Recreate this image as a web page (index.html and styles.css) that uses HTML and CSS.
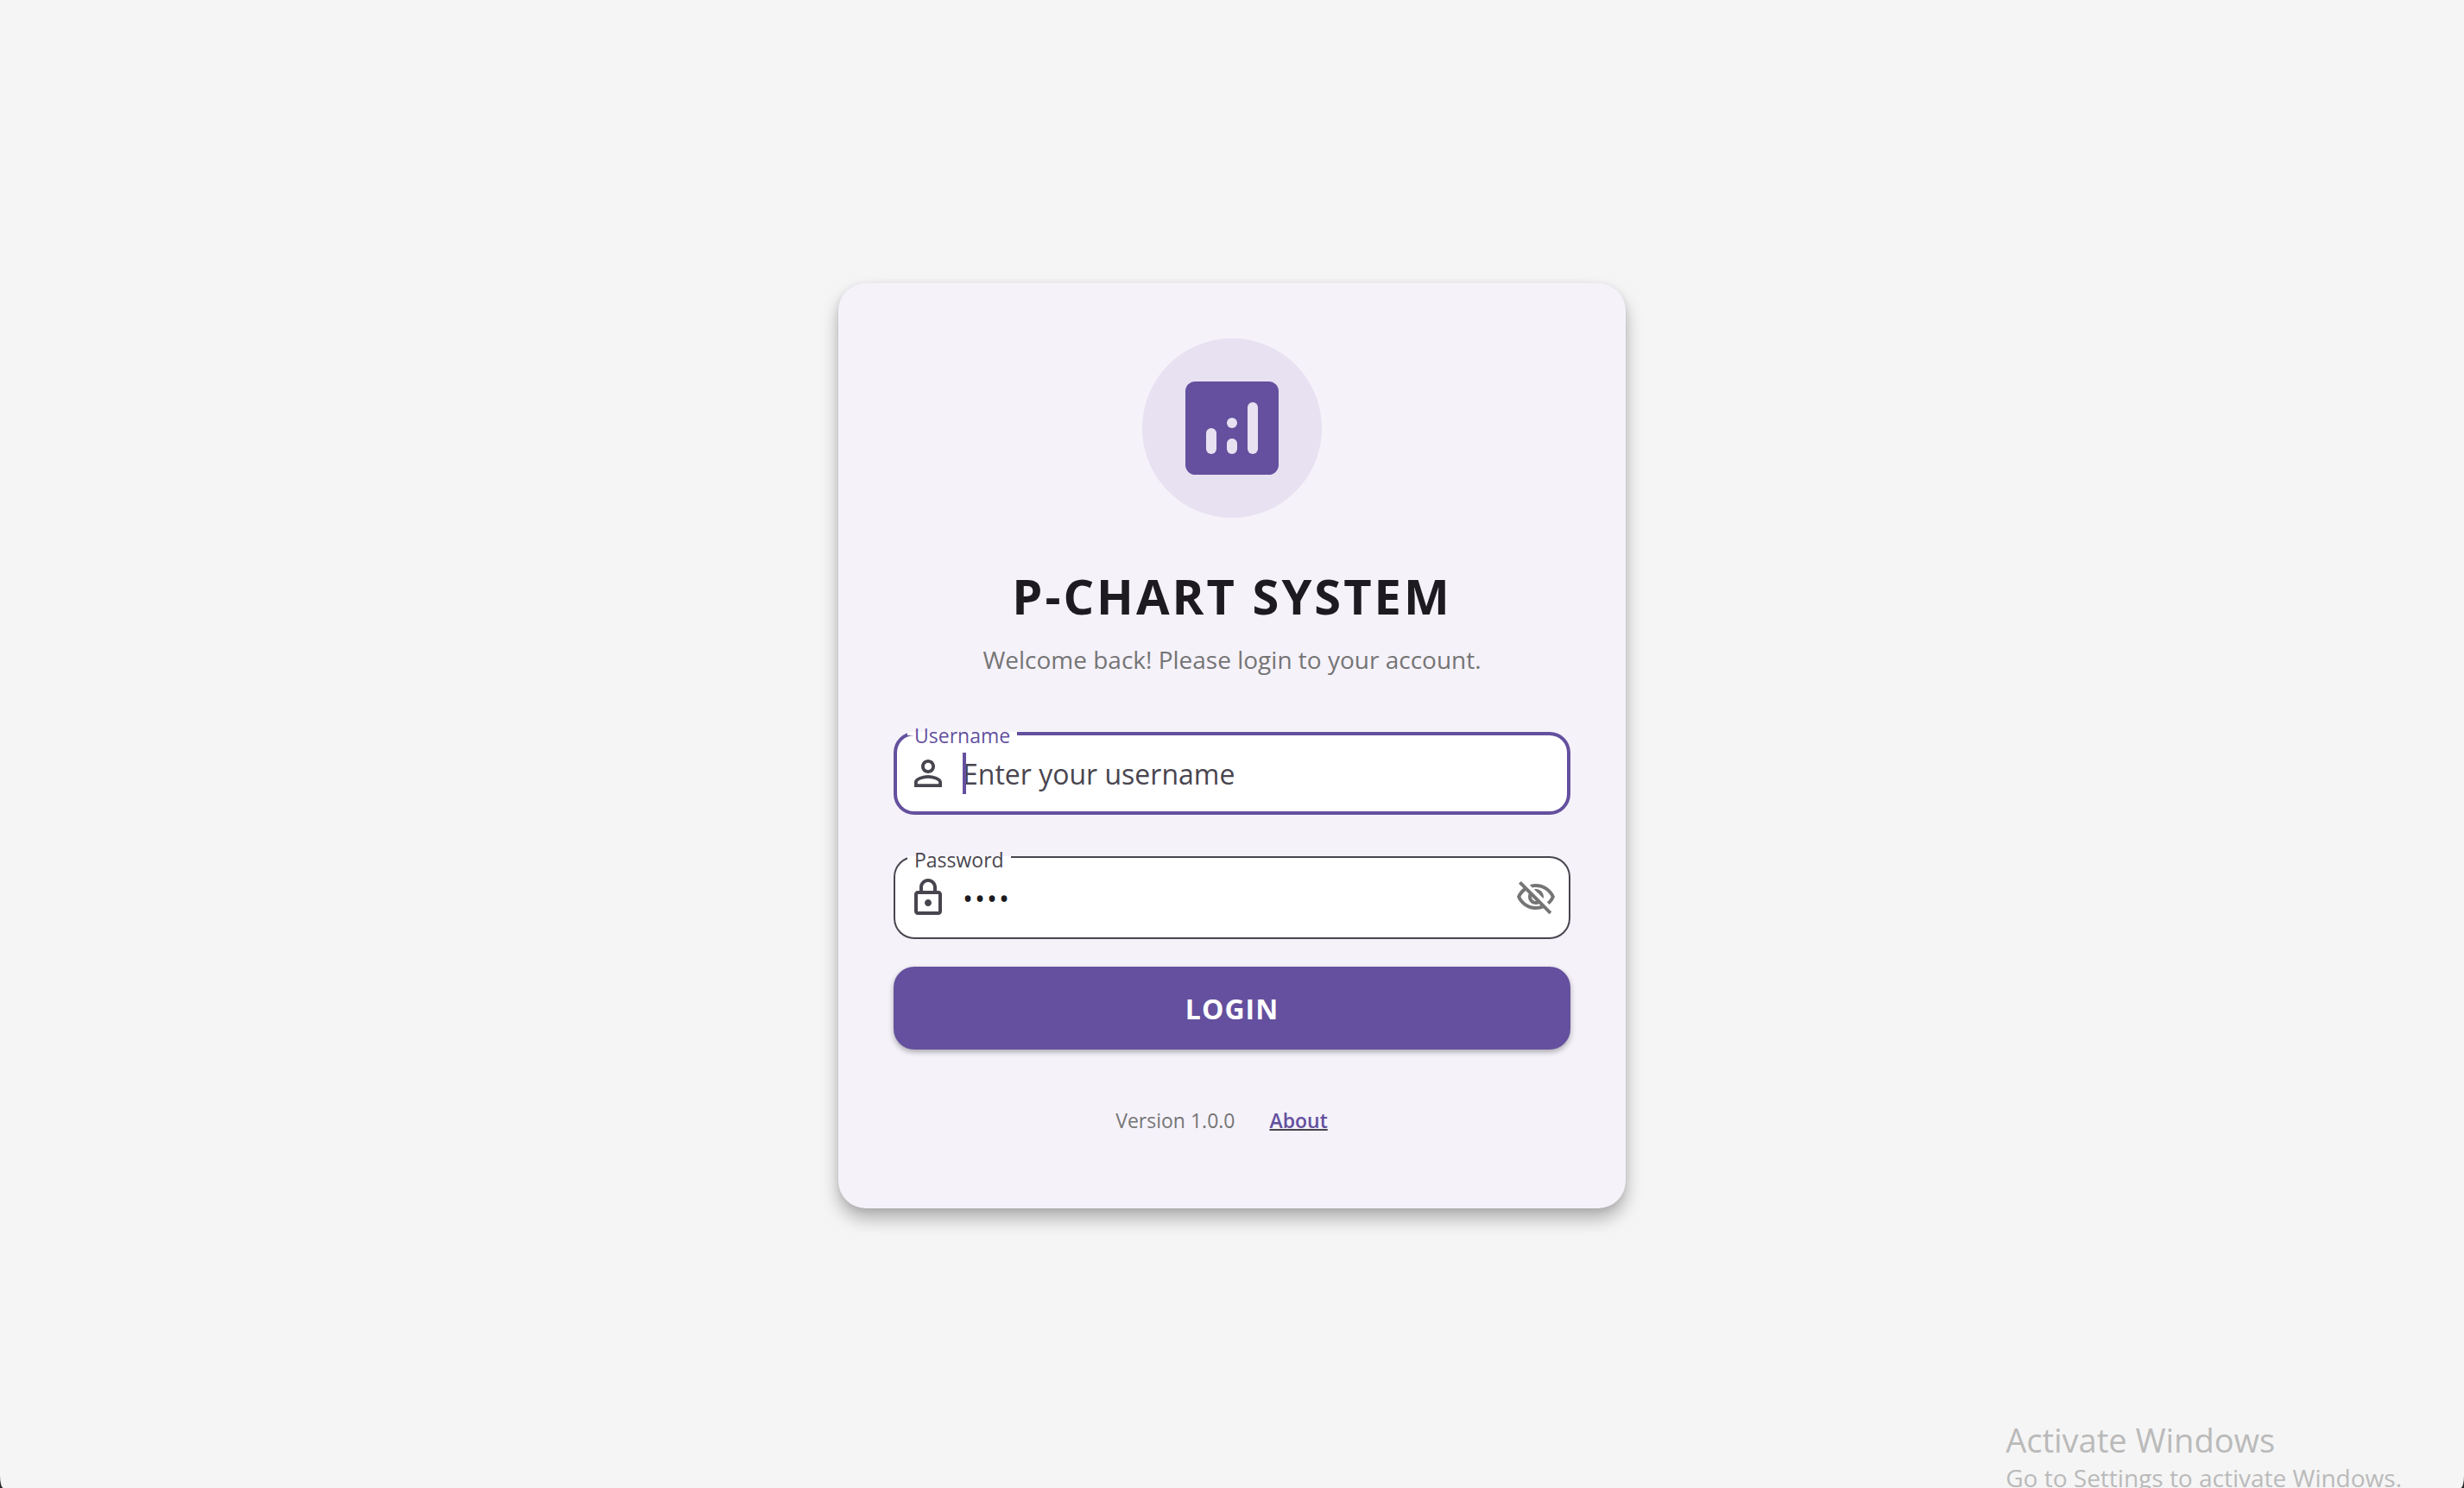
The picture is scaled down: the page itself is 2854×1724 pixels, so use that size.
FILE: index.html
```html
<!DOCTYPE html>
<html lang="en">
<head>
<meta charset="utf-8">
<meta name="viewport" content="width=device-width, initial-scale=1">
<title>P-Chart System</title>
<link rel="stylesheet" href="styles.css">
</head>
<body>
<div class="window">
  <main class="page">
    <form class="card">
      <div class="logo">
        <svg class="logo-icon" viewBox="0 0 24 24" aria-hidden="true">
          <rect x="3" y="3" width="18" height="18" rx="1.9" fill="#64509e"/>
          <g fill="#e7e1f1">
            <rect x="7" y="12" width="2" height="5" rx="1"/>
            <circle cx="12" cy="11" r="1"/>
            <rect x="11" y="14" width="2" height="3" rx="1"/>
            <rect x="15" y="7" width="2" height="10" rx="1"/>
          </g>
        </svg>
      </div>
      <h1 class="title">P-CHART SYSTEM</h1>
      <p class="subtitle">Welcome back! Please login to your account.</p>

      <div class="fields">
        <div class="field field-active">
          <label class="field-label" for="username">Username</label>
          <svg class="icon" viewBox="0 0 24 24" aria-hidden="true"><path d="M12 5.9c1.16 0 2.1.94 2.1 2.1s-.94 2.1-2.1 2.1S9.9 9.16 9.9 8s.94-2.1 2.1-2.1m0 9c2.97 0 6.1 1.46 6.1 2.1v1.1H5.9V17c0-.64 3.13-2.1 6.1-2.1M12 4C9.79 4 8 5.79 8 8s1.79 4 4 4 4-1.79 4-4-1.79-4-4-4zm0 9c-2.67 0-8 1.34-8 4v3h16v-3c0-2.66-5.33-4-8-4z"/></svg>
          <input class="field-input" id="username" type="text" placeholder="Enter your username">
          <span class="caret"></span>
        </div>
        <div class="field">
          <label class="field-label" for="password">Password</label>
          <svg class="icon" viewBox="0 0 24 24" aria-hidden="true"><path d="M18 8h-1V6c0-2.76-2.24-5-5-5S7 3.24 7 6v2H6c-1.1 0-2 .9-2 2v10c0 1.100.9 2 2 2h12c1.1 0 2-.9 2-2V10c0-1.100-.9-2-2-2zM9 6c0-1.660 1.340-3 3-3s3 1.340 3 3v2H9V6zm9 14H6V10h12v10zm-6-3c1.100 0 2-.9 2-2s-.9-2-2-2-2 .9-2 2 .9 2 2 2z"/></svg>
          <input class="field-input field-secret" id="password" type="password" value="1234">
          <button class="reveal" type="button" aria-label="Show password">
            <svg class="icon icon-muted" viewBox="0 0 24 24" aria-hidden="true"><path d="M12 6c3.790 0 7.170 2.130 8.820 5.500-.59 1.220-1.420 2.270-2.410 3.120l1.410 1.410c1.390-1.230 2.490-2.770 3.180-4.530C21.270 7.110 17 4 12 4c-1.270 0-2.490.2-3.640.57l1.650 1.650C10.660 6.090 11.320 6 12 6zm-1.070 1.140L13 9.210c.57.25 1.030.71 1.280 1.280l2.070 2.070c.08-.34.14-.7.14-1.070C16.500 9.010 14.480 7 12 7c-.37 0-.72.05-1.070.14zM2.010 3.870l2.680 2.680C3.060 7.830 1.770 9.530 1 11.500 2.730 15.890 7 19 12 19c1.520 0 2.980-.29 4.320-.82l3.420 3.420 1.410-1.410L3.420 2.450 2.010 3.870zm7.500 7.500l2.610 2.610c-.04.01-.08.02-.12.02-1.380 0-2.500-1.120-2.500-2.500 0-.05.01-.08.01-.13zm-3.400-3.400l1.750 1.750c-.23.55-.36 1.150-.36 1.780 0 2.480 2.020 4.500 4.500 4.500.63 0 1.230-.13 1.770-.36l.98.98c-.88.24-1.800.38-2.750.38-3.790 0-7.170-2.130-8.820-5.500.7-1.430 1.720-2.610 2.930-3.530z"/></svg>
          </button>
        </div>
      </div>

      <button class="login" type="submit">LOGIN</button>

      <footer class="card-footer">
        <span class="version">Version 1.0.0</span>
        <a class="about" href="#about">About</a>
      </footer>
    </form>
  </main>
  <aside class="watermark">
    <p class="watermark-title">Activate Windows</p>
    <p class="watermark-text">Go to Settings to activate Windows.</p>
  </aside>
</div>
</body>
</html>
```
FILE: styles.css
```css
* {
  box-sizing: border-box;
}

html {
  background: #2a2a2a;
}

body {
  margin: 0;
  font-family: "Segoe UI", "Open Sans", "Noto Sans", sans-serif;
  color: #1d1b20;
}

h1,
p {
  margin: 0;
}

.window {
  position: relative;
  overflow: hidden;
  min-height: 100vh;
  display: flex;
  background: #f5f5f5;
  border-radius: 0 0 4px 4px / 0 0 14px 14px;
}

.page {
  flex: 1;
  display: flex;
  justify-content: center;
  align-items: center;
  padding-top: 4px;
}

.card {
  width: 100%;
  max-width: 912px;
  padding: 64px;
  display: flex;
  flex-direction: column;
  background: #f5f2fa;
  border-radius: 32px;
  box-shadow: 0 12px 20px rgba(0, 0, 0, 0.28), 0 2px 8px rgba(0, 0, 0, 0.08);
}

.logo {
  align-self: center;
  width: 208px;
  height: 208px;
  display: flex;
  align-items: center;
  justify-content: center;
  border-radius: 50%;
  background: #e7e1f1;
}

.logo-icon {
  width: 144px;
  height: 144px;
}

.title {
  margin-top: 48px;
  font-size: 56px;
  line-height: 84px;
  font-weight: 700;
  letter-spacing: 3px;
  text-align: center;
}

.subtitle {
  margin-top: 12px;
  font-size: 28px;
  line-height: 40px;
  color: #757575;
  text-align: center;
}

.fields {
  margin-top: 64px;
  display: flex;
  flex-direction: column;
  gap: 48px;
}

.field {
  position: relative;
  display: flex;
  align-items: center;
  gap: 16px;
  height: 96px;
  padding: 0 16px;
  border-radius: 24px;
  background: #fff;
  box-shadow: inset 0 0 0 2px #49454f;
  color: #49454f;
}

.field-active {
  box-shadow: inset 0 0 0 4px #64509e;
}

/* The label sits on the top border and opens a notch in it. */
.field-label {
  position: absolute;
  top: -12px;
  left: 16px;
  padding: 0 8px;
  font-size: 23px;
  line-height: 32px;
  background: linear-gradient(transparent 12px, #fff 12px 16px, transparent 16px);
}

.field-active .field-label {
  color: #64509e;
}

.icon {
  display: block;
  flex: none;
  width: 48px;
  height: 48px;
  fill: #49454f;
}

.icon-muted {
  fill: #757575;
}

.field-input {
  flex: 1;
  min-width: 0;
  height: 48px;
  padding: 0;
  border: 0;
  outline: 0;
  background: none;
  font: inherit;
  font-size: 32px;
  color: #1d1b20;
}

.field-input::placeholder {
  color: #49454f;
  opacity: 1;
}

.field-secret {
  letter-spacing: 2px;
}

.caret {
  position: absolute;
  top: 24px;
  left: 80px;
  width: 4px;
  height: 48px;
  background: #64509e;
}

.reveal {
  padding: 0;
  border: 0;
  background: none;
}

.login {
  height: 96px;
  margin-top: 32px;
  border: 0;
  border-radius: 24px;
  background: #64509e;
  box-shadow: 0 3px 6px rgba(0, 0, 0, 0.3);
  color: #fff;
  font: inherit;
  font-size: 32px;
  font-weight: 700;
  letter-spacing: 1px;
}

.card-footer {
  display: flex;
  justify-content: center;
  gap: 40px;
  padding: 64px 24px 20px 0;
  font-size: 23px;
  line-height: 36px;
  color: #757575;
}

.about {
  font-weight: 600;
  color: #64509e;
  text-decoration: underline 2px #49454f;
}

.watermark {
  position: absolute;
  right: 72px;
  bottom: -8px;
  color: #bababa;
}

.watermark-title {
  font-size: 38px;
  line-height: 48px;
}

.watermark-text {
  font-size: 28px;
  line-height: 40px;
}
```
